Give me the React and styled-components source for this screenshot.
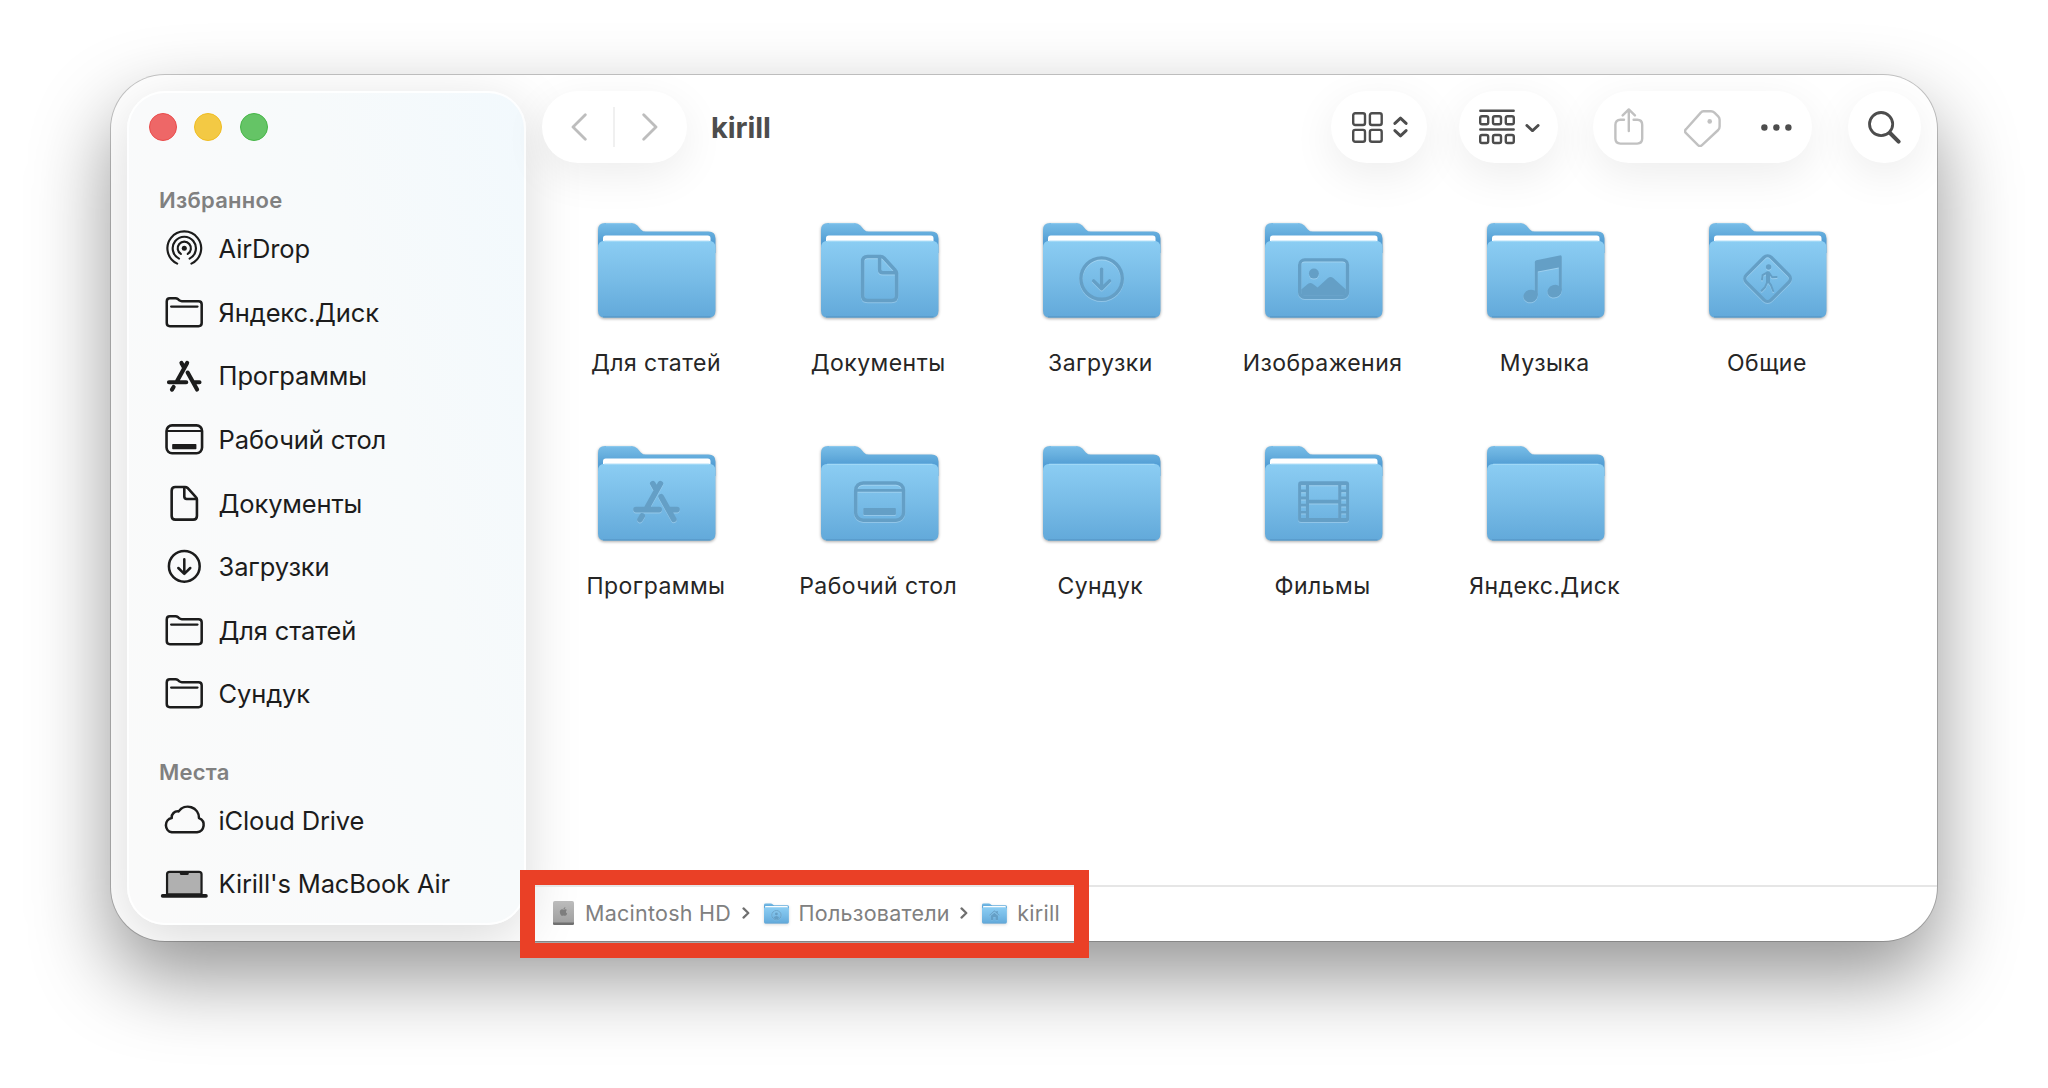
import styled, { createGlobalStyle } from 'styled-components'
import { FaApple } from 'react-icons/fa'

const GlobalStyle = createGlobalStyle`
	* {
		box-sizing: border-box;
	}

	body {
		margin: 0;
		background: #fff;
		font-family: Inter, 'Liberation Sans', sans-serif;
	}
`

// glyphs are drawn round 0,0 and shared by the sidebar and the big folders
const glyphs = {
	document: (
		<g fill="none" stroke="currentColor" strokeWidth="3.5" strokeLinejoin="round">
			<path d="M1-22H-12Q-17-22-17-17V17Q-17 22-12 22H12Q17 22 17 17V-5Q17-7 15.6-8.4L4.4-20.6Q3-22 1-22Z" />
			<path d="M0-21.5V-9Q0-5.8 3.2-5.8H16.5" />
		</g>
	),
	download: (
		<g fill="none" stroke="currentColor" strokeWidth="3.4" strokeLinecap="round" strokeLinejoin="round">
			<circle r="20.7" />
			<path d="M0-9.5V10M-8 2.3L0 10.2L8 2.3" />
		</g>
	),
	picture: (
		<g fill="currentColor">
			<rect x="-23.9" y="-18.7" width="47.8" height="37.4" rx="5" fill="none" stroke="currentColor" strokeWidth="3.4" />
			<circle cx="-9.7" cy="-5" r="5" />
			<path d="M-22.3 11L-15.5 5.2Q-13.2 3.4-11 5.2L-6 8.8L4.4-.6Q7-2.6 9.6-.6L22.3 11V17.1H-22.3Z" />
		</g>
	),
	music: (
		<g fill="currentColor">
			<path d="M-10.8 17V-16.4Q-10.8-18-9.2-18.4L14-23.2Q16.2-23.6 16.2-21.6V12H13.2V-11.2L-7.8-7V17Z" />
			<ellipse cx="-15" cy="17.4" rx="7.3" ry="6.2" transform="rotate(-18 -15 17.4)" />
			<ellipse cx="9" cy="12.6" rx="7.3" ry="6.2" transform="rotate(-18 9 12.6)" />
		</g>
	),
	shared: (
		<g fill="none" stroke="currentColor" strokeLinecap="round" strokeLinejoin="round">
			<rect x="-17.6" y="-17.6" width="35.2" height="35.2" rx="5" strokeWidth="3.3" transform="rotate(45)" />
			<circle cx="1" cy="-11.6" r="2.7" fill="currentColor" stroke="none" />
			<path d="M.4-5.4V2.6" strokeWidth="4" />
			<path d="M-.6-6L-5-3.4L-5.6 1M1.8-5.4L4.6-1.4L9-1.6M.8 3L3.4 6.6L5.6 12.4M-.6 4L-2.6 8.6L-6 12.2" strokeWidth="2" />
		</g>
	),
	apps: (
		<g fill="none" stroke="currentColor" strokeWidth="5.6" strokeLinecap="round">
			<path d="M3.8-18L-10.4 7.6M-3.8-18L-1-13M4.5-5L17.2 17.8M-20.6 8H2.6M13 8H20.4M-14.4 14.4L-16.6 18" />
		</g>
	),
	desktop: (
		<g fill="none" stroke="currentColor" strokeWidth="3.5">
			<rect x="-23.9" y="-18.7" width="47.8" height="37.4" rx="7.5" />
			<path d="M-23.9-11.2H23.9" strokeWidth="2.8" />
			<rect x="-16.3" y="6.3" width="32.6" height="7" rx="1" fill="currentColor" stroke="none" />
		</g>
	),
	film: (
		<path
			fill="currentColor"
			fillRule="evenodd"
			d="M-22.5-20.4H22.5Q25.5-20.4 25.5-17.4V17.4Q25.5 20.4 22.5 20.4H-22.5Q-25.5 20.4-25.5 17.4V-17.4Q-25.5-20.4-22.5-20.4Z
			M-14.6-16.3H14.6V-1.8H-14.6Z M-14.6 1.8H14.6V16.3H-14.6Z
			M-22.5-16.3h4.8v4.3h-4.8Z M-22.5-9.3h4.8v4.3h-4.8Z M-22.5-2.2h4.8v4.4h-4.8Z M-22.5 5h4.8v4.3h-4.8Z M-22.5 12h4.8v4.3h-4.8Z
			M17.7-16.3h4.8v4.3h-4.8Z M17.7-9.3h4.8v4.3h-4.8Z M17.7-2.2h4.8v4.4h-4.8Z M17.7 5h4.8v4.3h-4.8Z M17.7 12h4.8v4.3h-4.8Z"
		/>
	),
	person: (
		<g fill="currentColor">
			<circle r="22" fill="none" stroke="currentColor" strokeWidth="4.5" />
			<circle cy="-6" r="7" />
			<path d="M-13 13Q-11 4 0 4T13 13Q8 19 0 19T-13 13Z" />
		</g>
	),
	home: (
		<g fill="currentColor">
			<path d="M-25 0L0-23L9-15V-20H16V-8L25 0L22 3L0-17L-22 3Z" />
			<path fillRule="evenodd" d="M-17 3L0-12L17 3V22H-17Z M-5 22V8H5V22Z" />
		</g>
	),
	airdrop: (
		<g fill="none" stroke="currentColor" strokeWidth="2.9" strokeLinecap="round">
			<path d="M-9.6 20.6A22.7 22.7 0 1 1 9.6 20.6" />
			<path d="M-7.1 13.9A15.6 15.6 0 1 1 7.1 13.9" />
			<path d="M-4.6 7.6A8.9 8.9 0 1 1 4.6 7.6" />
			<circle r="3.4" fill="currentColor" stroke="none" />
		</g>
	),
	folder: (
		<g fill="none" stroke="currentColor" strokeWidth="3.4" strokeLinecap="round" strokeLinejoin="round">
			<path d="M-23.6-14.6Q-23.6-18.8-19.4-18.8H-12Q-10-18.8-8.2-17.4L-6.8-16.2Q-5.2-15-3.2-15H19.2Q23.4-15 23.4-10.8V14.5Q23.4 18.7 19.2 18.7H-19.4Q-23.6 18.7-23.6 14.5Z" />
			<path d="M-17.8-7.7H17.8" strokeWidth="2.9" />
		</g>
	),
	cloud: (
		<path
			fill="none"
			stroke="currentColor"
			strokeWidth="3.4"
			strokeLinejoin="round"
			d="M-16.8 16.2H17.2A10 10 0 0 0 19.8-3A15.1 15.1 0 0 0-7.6-12A8.2 8.2 0 0 0-17-3A9.8 9.8 0 0 0-16.8 16.2Z"
		/>
	),
	laptop: (
		<g>
			<path d="M-23.2 13.4V-13.4Q-23.2-16.8-19.8-16.8H19.8Q23.2-16.8 23.2-13.4V13.4Z" fill="#b0b0b0" stroke="currentColor" strokeWidth="3" />
			<path d="M-6-16.5H6V-14.5Q6-12.4 4-12.4H-4Q-6-12.4-6-14.5Z" fill="currentColor" />
			<path d="M-29.2 15.6H29.2" stroke="currentColor" strokeWidth="4.8" strokeLinecap="round" />
		</g>
	),
}

const favorites = [
	{ icon: 'airdrop', label: 'AirDrop' },
	{ icon: 'folder', label: 'Яндекс.Диск' },
	{ icon: 'apps', label: 'Программы' },
	{ icon: 'desktop', label: 'Рабочий стол' },
	{ icon: 'document', label: 'Документы' },
	{ icon: 'download', label: 'Загрузки' },
	{ icon: 'folder', label: 'Для статей' },
	{ icon: 'folder', label: 'Сундук' },
]

const places = [
	{ icon: 'cloud', label: 'iCloud Drive' },
	{ icon: 'laptop', label: "Kirill's MacBook Air" },
]

const folders = [
	{ label: 'Для статей', full: true },
	{ label: 'Документы', glyph: 'document', full: true },
	{ label: 'Загрузки', glyph: 'download', full: true },
	{ label: 'Изображения', glyph: 'picture', full: true },
	{ label: 'Музыка', glyph: 'music', full: true },
	{ label: 'Общие', glyph: 'shared', full: true },
	{ label: 'Программы', glyph: 'apps', full: true },
	{ label: 'Рабочий стол', glyph: 'desktop' },
	{ label: 'Сундук' },
	{ label: 'Фильмы', glyph: 'film', full: true },
	{ label: 'Яндекс.Диск' },
]

const App = () => {
	return (
		<Page>
			<GlobalStyle />
			<Gradients />
			<Window>
				<Sidebar>
					<Lights>
						<Light $color="#ee6767" $edge="#e94b4b" />
						<Light $color="#f3c944" $edge="#efbc22" />
						<Light $color="#65c466" $edge="#46b647" />
					</Lights>
					<SideList title="Избранное" items={favorites} />
					<SideList title="Места" items={places} />
				</Sidebar>
				<Main>
					<Toolbar />
					<Grid>
						{folders.map(item => (
							<Tile key={item.label}>
								<Folder glyph={item.glyph} full={item.full} />
								<TileLabel>{item.label}</TileLabel>
							</Tile>
						))}
					</Grid>
					<PathBar>
						<Disk />
						<Crumb>Macintosh HD</Crumb>
						<Arrow />
						<Folder glyph="person" full mini />
						<Crumb>Пользователи</Crumb>
						<Arrow />
						<Folder glyph="home" full mini />
						<Crumb>kirill</Crumb>
					</PathBar>
				</Main>
			</Window>
			<Marker />
		</Page>
	)
}

export default App

function SideList({ title, items }) {
	return (
		<Section>
			<SectionTitle>{title}</SectionTitle>
			{items.map(item => (
				<SideItem key={item.label}>
					<SideIcon viewBox="-30 -30 60 60">{glyphs[item.icon]}</SideIcon>
					{item.label}
				</SideItem>
			))}
		</Section>
	)
}

function Toolbar() {
	return (
		<Bar>
			<Pill $width={145} $gap={55}>
				<Icon $w={16} $h={28} $color="#bdbdbd" viewBox="0 0 16 28">
					<path d="M14.3 1.7L2 14L14.3 26.3" strokeWidth="2.8" />
				</Icon>
				<Icon $w={16} $h={28} $color="#bdbdbd" viewBox="0 0 16 28">
					<path d="M1.7 1.7L14 14L1.7 26.3" strokeWidth="2.8" />
				</Icon>
				<Divider />
			</Pill>
			<Title>kirill</Title>
			<Pill $width={96} $gap={10.5} $after={32} $nudge={2}>
				<Icon $w={31} $h={31} viewBox="0 0 31 31">
					<rect x="1.2" y="1.2" width="11.8" height="11.8" rx="2" />
					<rect x="17.9" y="1.2" width="11.8" height="11.8" rx="2" />
					<rect x="1.2" y="17.9" width="11.8" height="11.8" rx="2" />
					<rect x="17.9" y="17.9" width="11.8" height="11.8" rx="2" />
				</Icon>
				<Icon $w={15} $h={22} viewBox="0 0 15 22">
					<path d="M1.9 7.4L7.5 2.1L13.1 7.4M1.9 14.6L7.5 19.9L13.1 14.6" strokeWidth="2.9" />
				</Icon>
			</Pill>
			<Pill $width={99} $gap={10} $after={35} $nudge={2}>
				<Icon $w={36} $h={36} viewBox="0 0 36 36">
					<path d="M1.3 1.7H34.7M1.3 20.5H34.7" />
					{[7.2, 26].map(y => [1.2, 14, 26.8].map(x => <rect key={x + y} x={x} y={y} width="8" height="8" rx="1.8" />))}
				</Icon>
				<Icon $w={15} $h={8} $drop={1} viewBox="0 0 15 8">
					<path d="M1.9 1.5L7.5 6.8L13.1 1.5" strokeWidth="2.9" />
				</Icon>
			</Pill>
			<Pill $width={219} $gap={40} $after={36} $nudge={1}>
				<Icon $w={30} $h={37} $drop={-1} $color="#c1c1c1" viewBox="0 0 30 37">
					<path d="M10 11.8H6.4Q1.4 11.8 1.4 16.8V30.6Q1.4 35.6 6.4 35.6H23.2Q28.2 35.6 28.2 30.6V16.8Q28.2 11.8 23.2 11.8H19.6" />
					<path d="M14.8 23V1.6M8.7 7.4L14.8 1.4L20.9 7.4" />
				</Icon>
				<Icon $w={37} $h={37} $drop={1} $color="#c1c1c1" viewBox="0 0 37 37">
					<path d="M19.4 1.2H27Q29 1.2 30.4 2.6L34.2 6.4Q35.6 7.8 35.6 9.8V16.6Q35.6 18.6 34.2 20L18 35.2Q16 37 14 35.2L2 23.2Q0 21.2 2 19.2L16.8 2.6Q17.8 1.2 19.4 1.2Z" />
					<circle cx="25.7" cy="11.4" r="2.3" fill="currentColor" stroke="none" />
				</Icon>
				<Icon $w={31} $h={7} viewBox="0 0 31 7">
					<g fill="currentColor" stroke="none">
						<circle cx="3.4" cy="3.5" r="3.2" />
						<circle cx="15.4" cy="3.5" r="3.2" />
						<circle cx="27.4" cy="3.5" r="3.2" />
					</g>
				</Icon>
			</Pill>
			<Pill $width={73}>
				<Icon $w={33} $h={33} viewBox="0 0 33 33">
					<circle cx="13.1" cy="13.1" r="11.6" strokeWidth="2.8" />
					<path d="M22 22L30.6 30.6" strokeWidth="4" />
				</Icon>
			</Pill>
		</Bar>
	)
}

function Gradients() {
	return (
		<Defs>
			<defs>
				<linearGradient id="front" x1="0" y1="0" x2="0" y2="1">
					<stop offset="0" stopColor="#8bcdf3" />
					<stop offset=".5" stopColor="#78bce7" />
					<stop offset="1" stopColor="#62a9da" />
				</linearGradient>
				<linearGradient id="back" x1="0" y1="0" x2="0" y2="1">
					<stop offset="0" stopColor="#78bde8" />
					<stop offset=".3" stopColor="#67afde" />
					<stop offset=".6" stopColor="#549fd5" />
				</linearGradient>
				<linearGradient id="disk" x1="0" y1="0" x2="0" y2="1">
					<stop offset="0" stopColor="#bcbcbc" />
					<stop offset="1" stopColor="#9d9d9d" />
				</linearGradient>
			</defs>
		</Defs>
	)
}

function Folder({ glyph, full, mini }) {
	return (
		<FolderArt $mini={mini} viewBox="0 0 118 95">
			<path d="M0 30V7Q0 0 7 0H33.5Q37 0 39.4 2.6L42.8 6.4Q44.8 8.6 48 8.6H110.5Q117.5 8.6 117.5 15.6V30Z" fill="url(#back)" />
			<path d="M8 .6H33.5" stroke="#8fcbee" strokeWidth="1" />
			{full && <path d="M5 24V15.4Q5 12.6 7.8 12.6H109.7Q112.5 12.6 112.5 15.4V24Z" fill="#fff" />}
			<path d="M0 25Q0 17.8 7 17.8H110.5Q117.5 17.8 117.5 25V87.5Q117.5 94.6 110.5 94.6H7Q0 94.6 0 87.5Z" fill="url(#front)" />
			<path d="M6 18.4H111.5" stroke="#a3d9f7" strokeWidth="1" />
			<path d="M5 93.9H112.5" stroke="#5799c8" strokeWidth="1.4" />
			{glyph && <Emboss transform="translate(58.6 55.6)">{glyphs[glyph]}</Emboss>}
		</FolderArt>
	)
}

function Disk() {
	return (
		<DiskArt viewBox="0 0 21 24">
			<rect width="21" height="24" rx="1.8" fill="url(#disk)" />
			<path d="M0 21.4H21V22.4Q21 24 19.4 24H1.6Q0 24 0 22.4Z" fill="#707070" />
			<FaApple x="5.5" y="5.5" size="10" color="#7e7e7e" />
		</DiskArt>
	)
}

function Arrow() {
	return (
		<ArrowArt viewBox="0 0 8 12">
			<path d="M1.5 1.4L6.3 6L1.5 10.6" fill="none" stroke="#6f6f6f" strokeWidth="2.2" strokeLinecap="round" strokeLinejoin="round" />
		</ArrowArt>
	)
}

const Page = styled.div `
	position: relative;
	width: 2048px;
	height: 1088px;
	padding: 75px 111px 0 111px;
	overflow: hidden;
`
const Defs = styled.svg `
	position: absolute;
	width: 0;
	height: 0;
`
const Window = styled.div `
	display: flex;
	width: 1826px;
	height: 866px;
	padding: 16px 0 0 16px;
	border-radius: 54px;
	overflow: hidden;
	background: #fff;
	box-shadow: 0 0 0 1px rgba(0, 0, 0, 0.2), 0 36px 80px rgba(0, 0, 0, 0.42);
`
const Sidebar = styled.aside `
	width: 399px;
	height: 834px;
	flex-shrink: 0;
	padding: 20px 0 0 32px;
	border-radius: 38px;
	border: 2px solid rgba(255, 255, 255, 0.85);
	background: linear-gradient(75deg, #fafafa 0%, #f9fafb 40%, #f7fafb 65%, #f2f9fd 100%);
	box-shadow: 0 14px 56px rgba(0, 0, 0, 0.15);
`
const Lights = styled.div `
	display: flex;
	gap: 17.4px;
	margin-left: -12px;
`
const Light = styled.span `
	width: 28px;
	height: 28px;
	border-radius: 50%;
	background: ${props => props.$color};
	border: 1px solid ${props => props.$edge};
`
const Section = styled.section `
	padding-top: 45px;

	& + & {
		padding-top: 32px;
	}
`
const SectionTitle = styled.h4 `
	display: flex;
	align-items: center;
	height: 28px;
	margin: 0 0 3px -2px;
	font-size: 22px;
	font-weight: 600;
	letter-spacing: 0.25px;
	color: #808080;
`
const SideItem = styled.div `
	display: flex;
	align-items: center;
	gap: 12px;
	height: 63.57px;
	padding-left: 1px;
	font-size: 25.5px;
	font-weight: 420;
	letter-spacing: -0.15px;
	color: #1c1c1c;
	white-space: nowrap;
`
const SideIcon = styled.svg `
	width: 44.6px;
	height: 44.6px;
	flex-shrink: 0;
	overflow: visible;
`
const Main = styled.main `
	display: flex;
	flex: 1;
	flex-direction: column;
	min-width: 0;
`
const Bar = styled.header `
	display: flex;
	align-items: center;
	height: 72px;
	padding: 0 16px;
`
const Pill = styled.div `
	position: relative;
	display: flex;
	align-items: center;
	justify-content: center;
	flex-shrink: 0;
	gap: ${props => props.$gap || 0}px;
	width: ${props => props.$width}px;
	height: 72px;
	padding-left: ${props => props.$nudge || 0}px;
	margin-right: ${props => props.$after || 0}px;
	border-radius: 36px;
	background: #fff;
	box-shadow: 0 12px 44px rgba(0, 0, 0, 0.075);
`
const Divider = styled.span `
	position: absolute;
	left: 71px;
	top: 16px;
	width: 2px;
	height: 40px;
	background: #f0f0f0;
`
const Icon = styled.svg `
	width: ${props => props.$w}px;
	height: ${props => props.$h}px;
	margin-top: ${props => (props.$drop || 0) * 2}px;
	flex-shrink: 0;
	color: ${props => props.$color || '#4d4d4d'};
	fill: none;
	stroke: currentColor;
	stroke-width: 2.4px;
	stroke-linecap: round;
	stroke-linejoin: round;
`
const Title = styled.h1 `
	flex: 1;
	margin: 0 0 0 24px;
	font-size: 29px;
	font-weight: 680;
	letter-spacing: -0.1px;
	color: #4d4d4d;
`
const Grid = styled.div `
	display: grid;
	flex: 1;
	grid-template-columns: repeat(6, 222.2px);
	grid-auto-rows: 222.5px;
	align-content: start;
	padding: 60px 0 0 20.4px;
`
const Tile = styled.div `
	display: flex;
	flex-direction: column;
	align-items: center;
`
const FolderArt = styled.svg `
	width: ${props => (props.$mini ? 25 : 118)}px;
	height: ${props => (props.$mini ? 21 : 95)}px;
	flex-shrink: 0;
	overflow: visible;
	filter: drop-shadow(0 1px 1.5px rgba(0, 0, 0, ${props => (props.$mini ? 0.15 : 0.35)}));
`
const Emboss = styled.g `
	color: #649fc6;
	filter: drop-shadow(0 1px 0.5px rgba(255, 255, 255, 0.25));
`
const TileLabel = styled.span `
	margin: 29px 0 0 -3px;
	font-size: 23px;
	font-weight: 420;
	line-height: 32px;
	letter-spacing: 0.45px;
	color: #262626;
	white-space: nowrap;
`
const PathBar = styled.footer `
	display: flex;
	align-items: center;
	height: 56px;
	padding: 0 0 2px 27px;
	border-top: 2px solid #e6e6e6;
`
const Crumb = styled.span `
	margin: 0 10.5px 0 10px;
	font-size: 21.5px;
	letter-spacing: 0.25px;
	color: #808080;
	white-space: nowrap;
`
const DiskArt = styled.svg `
	width: 21px;
	height: 24px;
	margin-right: 1px;
`
const ArrowArt = styled.svg `
	width: 8px;
	height: 12px;
	margin-right: 14px;
`
const Marker = styled.div `
	position: absolute;
	left: 520px;
	top: 870px;
	width: 568.5px;
	height: 88px;
	border: 15px solid #ea4026;
`
